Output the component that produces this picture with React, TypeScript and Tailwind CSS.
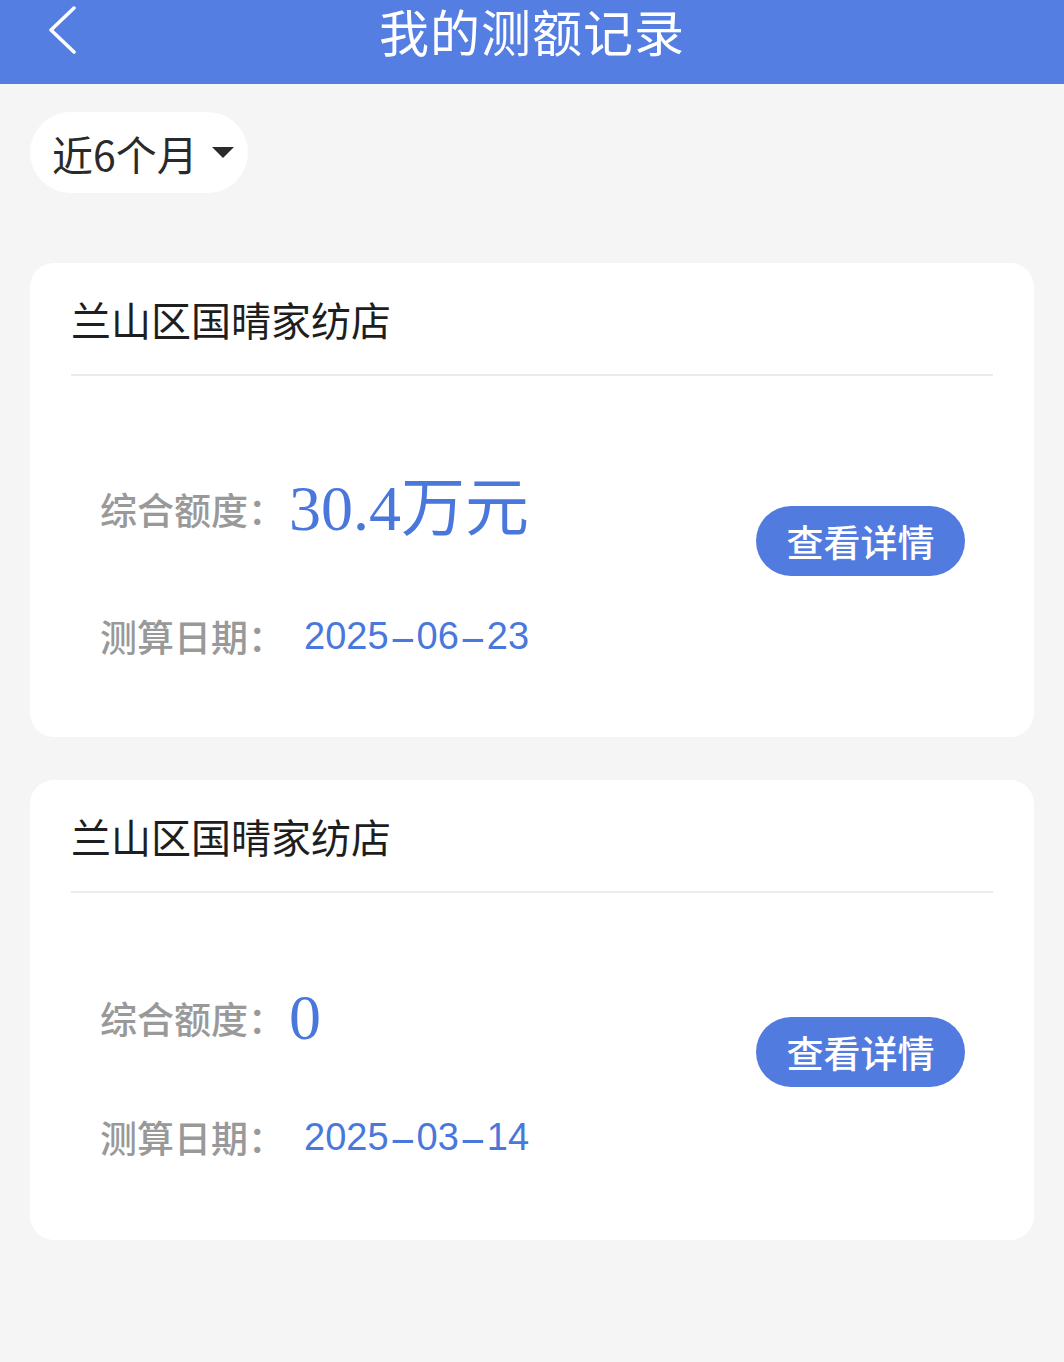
import React from "react";

const FONT = '"Noto Sans CJK SC", "Noto Sans", sans-serif';

type Rec = {
  amount: string;
  date: string;
  h: string;
  bodyPt: string;
  rowGap: string;
  btnMt: string;
};

function DateText({ value }: { value: string }) {
  const parts = value.split("-");
  return (
    <span
      className="text-[38px] leading-[50px] text-[#4a77dc] ml-[19px] flex items-center"
      style={{ fontFamily: '"Liberation Sans", Arial, sans-serif' }}
    >
      {parts.map((p, i) => (
        <React.Fragment key={i}>
          {i > 0 && (
            <span className="inline-block w-[28px] text-center scale-x-[2.2] translate-y-[2px]">-</span>
          )}
          <span>{p}</span>
        </React.Fragment>
      ))}
    </span>
  );
}

function Card({ rec }: { rec: Rec }) {
  return (
    <div className={`mx-[30px] bg-white rounded-[24px] px-[41px] flex flex-col ${rec.h}`}>
      <div className="h-[111px] flex items-start pt-[33px]">
        <span className="text-[40px] leading-[46px] text-[#1e1e1e]">兰山区国晴家纺店</span>
      </div>
      <div className="h-[2px] bg-[#ebebeb] w-full" />
      <div className="flex justify-between pl-[29px] pr-[28px]">
        <div className={`flex flex-col ${rec.bodyPt} ${rec.rowGap}`}>
          <div className="flex items-center h-[80px]">
            <span className="text-[37px] leading-[40px] text-[#999999] font-medium">综合额度：</span>
            <span
              className="text-[64px] leading-[80px] text-[#4a77dc] ml-[4px]"
              style={{ fontFamily: '"Liberation Serif", "Noto Sans CJK SC", serif' }}
            >
              {rec.amount}
            </span>
          </div>
          <div className="flex items-center h-[50px]">
            <span className="text-[37px] leading-[40px] text-[#999999] font-medium">测算日期：</span>
            <DateText value={rec.date} />
          </div>
        </div>
        <div className={rec.btnMt}>
          <button className="w-[209px] h-[70px] rounded-full bg-[#527be0] text-white text-[37px] leading-[70px] font-medium flex items-center justify-center">
            查看详情
          </button>
        </div>
      </div>
    </div>
  );
}

export default function App() {
  const records: Rec[] = [
    { amount: "30.4万元", date: "2025-06-23", h: "h-[474px]", bodyPt: "pt-[93px]", rowGap: "gap-[62px]", btnMt: "mt-[130px]" },
    { amount: "0", date: "2025-03-14", h: "h-[460px]", bodyPt: "pt-[85px]", rowGap: "gap-[54px]", btnMt: "mt-[124px]" },
  ];
  return (
    <div className="w-full min-h-[1362px] bg-[#f5f5f5]" style={{ fontFamily: FONT }}>
      <div className="relative h-[84px] bg-[#557ee3] flex justify-center items-start">
        <svg
          className="absolute left-[46px] top-[6px]"
          width="32"
          height="48"
          viewBox="0 0 32 48"
          fill="none"
        >
          <path d="M28 2 L5 24 L28 46" stroke="white" strokeWidth="3.5" strokeLinecap="round" strokeLinejoin="round" />
        </svg>
        <span className="text-[50px] leading-[60px] text-white tracking-[1px]">我的测额记录</span>
      </div>

      <div className="pt-[28px] pl-[30px]">
        <div className="w-[218px] h-[81px] rounded-full bg-white flex items-center pl-[22px]">
          <span className="text-[41px] leading-[50px] text-[#2a2a2a]">近6个月</span>
          <svg className="ml-[14px]" width="22" height="11" viewBox="0 0 22 11">
            <path d="M0 0 H22 L11 11 Z" fill="#2a2a2a" />
          </svg>
        </div>
      </div>

      <div className="mt-[70px] flex flex-col gap-[43px]">
        {records.map((r, i) => (
          <Card key={i} rec={r} />
        ))}
      </div>
    </div>
  );
}
